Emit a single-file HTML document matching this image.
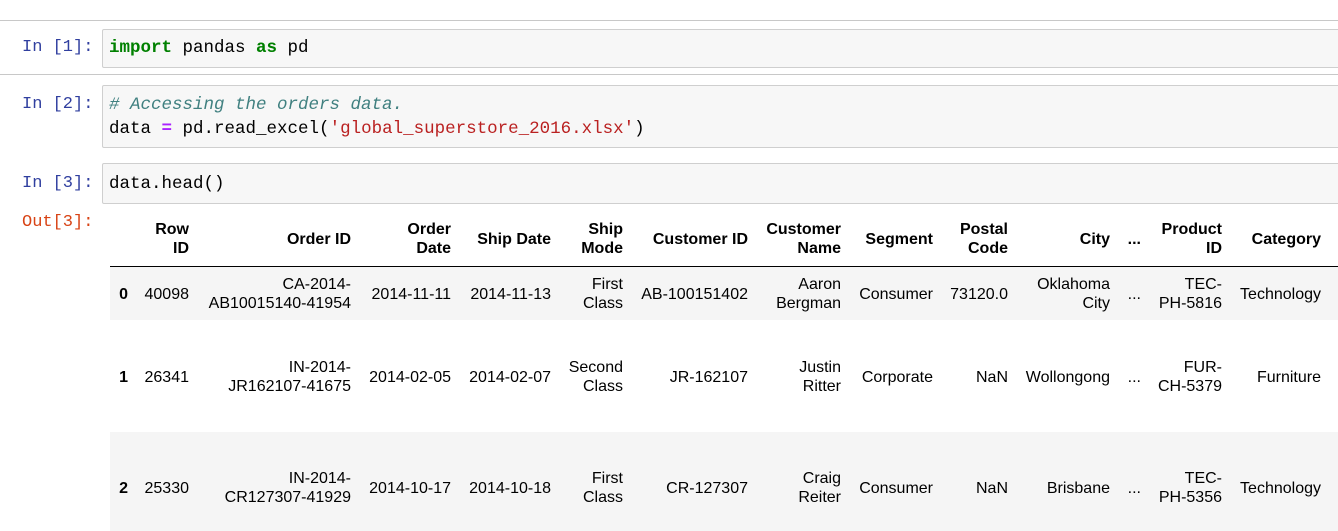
<!DOCTYPE html>
<html><head><meta charset="utf-8"><style>
body{margin:0;width:1338px;height:531px;background:#fff;position:relative;overflow:hidden;font-family:"Liberation Sans",Arial,sans-serif;}
.hr{position:absolute;left:0;width:1338px;height:1px;background:#c8c8c8}
.box{position:absolute;left:102px;width:1240px;background:#f7f7f7;border:1px solid #cfcfcf;border-radius:2px;box-sizing:border-box}
.p{position:absolute;left:22px;font:17px/20px "Liberation Mono",monospace;color:#303f9f}
.o{color:#d84315}
.code{position:absolute;left:109px;font:17.5px/24px "Liberation Mono",monospace;color:#000;white-space:pre}
.k{color:#008000;font-weight:bold}.cm{color:#408080;font-style:italic}.s{color:#ba2121}.op{color:#aa22ff;font-weight:bold}
.c{position:absolute;font-size:16px;line-height:19px;text-align:right;white-space:nowrap;color:#000}
.b{font-weight:bold}
.bg{position:absolute;left:110px;width:1228px;background:#f5f5f5}
</style></head><body>
<div class="hr" style="top:20px"></div>
<div class="hr" style="top:74px"></div>
<div class="box" style="top:29px;height:39px"></div>
<div class="p" style="top:38px">In [1]:</div>
<div class="code" style="top:36px"><span class="k">import</span> pandas <span class="k">as</span> pd</div>
<div class="box" style="top:85px;height:63px"></div>
<div class="p" style="top:95px">In [2]:</div>
<div class="code" style="top:93px"><span class="cm"># Accessing the orders data.</span>
data <span class="op">=</span> pd.read_excel(<span class="s">'global_superstore_2016.xlsx'</span>)</div>
<div class="box" style="top:163px;height:41px"></div>
<div class="p" style="top:174px">In [3]:</div>
<div class="code" style="top:172px">data.head()</div>
<div class="p o" style="top:213px">Out[3]:</div>

<div class="bg" style="top:267px;height:53px"></div>
<div class="bg" style="top:432px;height:99px"></div>
<div style="position:absolute;left:110px;top:266px;width:1228px;height:1px;background:#000"></div>

<!-- header -->
<div class="c b" style="right:1149px;top:220px">Row<br>ID</div>
<div class="c b" style="right:987px;top:230px">Order ID</div>
<div class="c b" style="right:887px;top:220px">Order<br>Date</div>
<div class="c b" style="right:787px;top:230px">Ship Date</div>
<div class="c b" style="right:715px;top:220px">Ship<br>Mode</div>
<div class="c b" style="right:590px;top:230px">Customer ID</div>
<div class="c b" style="right:497px;top:220px">Customer<br>Name</div>
<div class="c b" style="right:405px;top:230px">Segment</div>
<div class="c b" style="right:330px;top:220px">Postal<br>Code</div>
<div class="c b" style="right:228px;top:230px">City</div>
<div class="c b" style="right:197px;top:230px">...</div>
<div class="c b" style="right:116px;top:220px">Product<br>ID</div>
<div class="c b" style="right:17px;top:230px">Category</div>

<!-- row 0 -->
<div class="c b" style="right:1210px;top:285px">0</div>
<div class="c" style="right:1149px;top:285px">40098</div>
<div class="c" style="right:987px;top:275px">CA-2014-<br>AB10015140-41954</div>
<div class="c" style="right:887px;top:285px">2014-11-11</div>
<div class="c" style="right:787px;top:285px">2014-11-13</div>
<div class="c" style="right:715px;top:275px">First<br>Class</div>
<div class="c" style="right:590px;top:285px">AB-100151402</div>
<div class="c" style="right:497px;top:275px">Aaron<br>Bergman</div>
<div class="c" style="right:405px;top:285px">Consumer</div>
<div class="c" style="right:330px;top:285px">73120.0</div>
<div class="c" style="right:228px;top:275px">Oklahoma<br>City</div>
<div class="c" style="right:197px;top:285px">...</div>
<div class="c" style="right:116px;top:275px">TEC-<br>PH-5816</div>
<div class="c" style="right:17px;top:285px">Technology</div>

<!-- row 1 -->
<div class="c b" style="right:1210px;top:368px">1</div>
<div class="c" style="right:1149px;top:368px">26341</div>
<div class="c" style="right:987px;top:358px">IN-2014-<br>JR162107-41675</div>
<div class="c" style="right:887px;top:368px">2014-02-05</div>
<div class="c" style="right:787px;top:368px">2014-02-07</div>
<div class="c" style="right:715px;top:358px">Second<br>Class</div>
<div class="c" style="right:590px;top:368px">JR-162107</div>
<div class="c" style="right:497px;top:358px">Justin<br>Ritter</div>
<div class="c" style="right:405px;top:368px">Corporate</div>
<div class="c" style="right:330px;top:368px">NaN</div>
<div class="c" style="right:228px;top:368px">Wollongong</div>
<div class="c" style="right:197px;top:368px">...</div>
<div class="c" style="right:116px;top:358px">FUR-<br>CH-5379</div>
<div class="c" style="right:17px;top:368px">Furniture</div>

<!-- row 2 -->
<div class="c b" style="right:1210px;top:479px">2</div>
<div class="c" style="right:1149px;top:479px">25330</div>
<div class="c" style="right:987px;top:469px">IN-2014-<br>CR127307-41929</div>
<div class="c" style="right:887px;top:479px">2014-10-17</div>
<div class="c" style="right:787px;top:479px">2014-10-18</div>
<div class="c" style="right:715px;top:469px">First<br>Class</div>
<div class="c" style="right:590px;top:479px">CR-127307</div>
<div class="c" style="right:497px;top:469px">Craig<br>Reiter</div>
<div class="c" style="right:405px;top:479px">Consumer</div>
<div class="c" style="right:330px;top:479px">NaN</div>
<div class="c" style="right:228px;top:479px">Brisbane</div>
<div class="c" style="right:197px;top:479px">...</div>
<div class="c" style="right:116px;top:469px">TEC-<br>PH-5356</div>
<div class="c" style="right:17px;top:479px">Technology</div>
</body></html>
